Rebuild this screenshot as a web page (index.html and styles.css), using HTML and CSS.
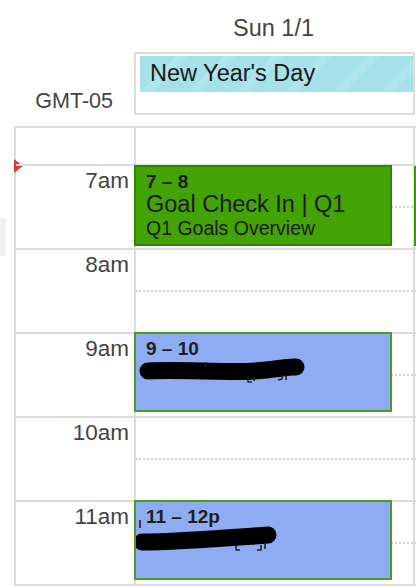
FILE: index.html
```html
<!DOCTYPE html>
<html>
<head>
<meta charset="utf-8">
<link rel="stylesheet" href="styles.css">
</head>
<body>
<div class="page">
  <div class="side-tab"></div>
  <div class="head">
    <div class="head-gutter"><span class="tz">GMT-05</span></div>
    <div class="head-day">
      <div class="day-title">Sun 1/1</div>
      <div class="allday"><div class="chip">New Year's Day</div></div>
    </div>
  </div>
  <div class="grid">
    <div class="now-marker"></div>
    <div class="gutter">
      <div class="slot first"></div>
      <div class="slot"><span class="label">7am</span></div>
      <div class="slot"><span class="label">8am</span></div>
      <div class="slot"><span class="label">9am</span></div>
      <div class="slot"><span class="label">10am</span></div>
      <div class="slot"><span class="label">11am</span></div>
      <div class="slot last"></div>
    </div>
    <div class="day">
      <div class="slot first"></div>
      <div class="slot">
        <div class="half"></div>
        <div class="event green">
          <div class="ev-time">7 – 8</div>
          <div class="ev-title">Goal Check In | Q1</div>
          <div class="ev-sub">Q1 Goals Overview</div>
        </div>
      </div>
      <div class="slot"><div class="half"></div></div>
      <div class="slot">
        <div class="half"></div>
        <div class="event blue">
          <div class="ev-time">9 – 10</div>
          <svg class="redact" viewBox="0 0 254 76" width="254" height="76">
            <path d="M12 37 C 50 35, 100 40, 130 36 S 155 33, 160 33" />
            <path class="thin" d="M70 28 L70 33 M112 44 L112 48 L116 48 M118 43 L118 47 M146 41 L146 45 L142 46 M150 41 L150 46" />
          </svg>
        </div>
      </div>
      <div class="slot"><div class="half"></div></div>
      <div class="slot">
        <div class="half"></div>
        <div class="event blue">
          <div class="ev-time">11 – 12p</div>
          <svg class="redact" viewBox="0 0 254 76" width="254" height="76">
            <path d="M6 40 C 40 40, 90 36, 132 33" />
            <path class="thin" d="M4 18 L4 26 M100 43 L100 48 L104 48 M125 43 L125 48 L121 48 M129 42 L129 47" />
          </svg>
        </div>
      </div>
      <div class="slot last"></div>
    </div>
    <div class="next">
      <div class="slot first"></div>
      <div class="slot"><div class="half"></div><div class="sliver"></div></div>
      <div class="slot"><div class="half"></div></div>
      <div class="slot"><div class="half"></div></div>
      <div class="slot"><div class="half"></div></div>
      <div class="slot"><div class="half"></div></div>
      <div class="slot last"></div>
    </div>
  </div>
</div>
</body>
</html>
```

FILE: styles.css
```css
html, body {
  margin: 0;
  padding: 0;
  background: #fff;
}
body {
  width: 416px;
  height: 586px;
  overflow: hidden;
  font-family: "Liberation Sans", Arial, sans-serif;
  color: #444;
}
.page {
  position: relative;
  width: 416px;
  height: 586px;
  overflow: hidden;
}
.side-tab {
  position: absolute;
  left: 0;
  top: 218px;
  width: 6px;
  height: 38px;
  background: #eef0f0;
}
.head {
  display: flex;
  height: 126px;
}
.head-gutter {
  width: 134px;
  flex: none;
  display: flex;
  align-items: flex-end;
  justify-content: flex-end;
  padding: 0 21px 12px 0;
  box-sizing: border-box;
}
.tz {
  font-size: 21.5px;
  color: #444;
}
.head-day {
  flex: 1;
  display: flex;
  flex-direction: column;
}
.day-title {
  height: 52px;
  box-sizing: border-box;
  padding-top: 15px;
  padding-right: 3px;
  text-align: center;
  font-size: 23.5px;
  color: #444;
}
.allday {
  height: 63px;
  margin-right: 1px;
  box-sizing: border-box;
  border: 2px solid #dcdcdc;
  padding: 2px 0 0 4px;
}
.chip {
  height: 36px;
  box-sizing: border-box;
  padding: 4px 0 0 10px;
  font-size: 23.5px;
  color: #1a1a1a;
  background-color: #a4e1e9;
  background-image: repeating-linear-gradient(135deg, #a4e1e9 0 26px, #afe5ec 26px 34px);
}
.grid {
  position: relative;
  display: flex;
  margin-left: 14px;
  border-left: 2px solid #dcdcdc;
  border-top: 2px solid #dcdcdc;
}
.now-marker {
  position: absolute;
  left: -2px;
  top: 31px;
  width: 0;
  height: 0;
  border-left: 9px solid #d93a3a;
  border-top: 7px solid transparent;
  border-bottom: 7px solid transparent;
}
.gutter {
  width: 118px;
  flex: none;
}
.day {
  width: 277px;
  flex: none;
  border-left: 2px solid #dcdcdc;
}
.next {
  flex: 1;
  border-left: 2px solid #dcdcdc;
}
.slot {
  position: relative;
  height: 84px;
  box-sizing: border-box;
  border-top: 2px solid #dcdcdc;
}
.slot.first {
  height: 36px;
  border-top: none;
}
.slot.last {
  height: 2px;
}
.label {
  display: block;
  text-align: right;
  padding: 2px 5px 0 0;
  font-size: 22.5px;
  color: #444;
}
.half {
  height: 40px;
  border-bottom: 2px dotted #d4d4d4;
}
.event {
  position: absolute;
  left: -2px;
  top: -1px;
  width: 258px;
  height: 81px;
  box-sizing: border-box;
  padding: 3px 0 0 10px;
  color: #1b1b1b;
  overflow: hidden;
}
.event.green {
  background: #43a303;
  border: 2px solid #2b8800;
}
.event.blue {
  top: -2px;
  height: 80px;
  background: #8eacf1;
  border: 2px solid #4c9b1f;
}
.ev-time {
  font-size: 19px;
  line-height: 19px;
  padding-top: 2px;
  font-weight: bold;
  color: #1e1e1e;
}
.ev-title {
  font-size: 23.5px;
  line-height: 26px;
}
.ev-sub {
  font-size: 19.5px;
  line-height: 22px;
}
.redact {
  position: absolute;
  left: 0;
  top: 0;
  overflow: visible;
}
.redact path {
  fill: none;
  stroke: #000;
  stroke-width: 17;
  stroke-linecap: round;
  stroke-linejoin: round;
}
.redact path.thin {
  stroke: #222;
  stroke-width: 1.6;
  stroke-linecap: butt;
}
.sliver {
  position: absolute;
  left: -1px;
  top: 0;
  width: 3px;
  height: 80px;
  background: #3d9a00;
}
```
